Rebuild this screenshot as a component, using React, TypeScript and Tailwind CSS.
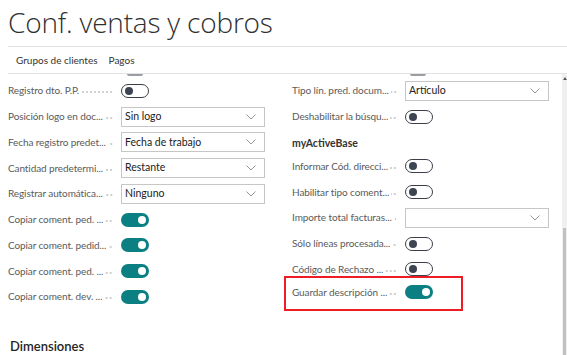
import React from 'react';

type Field =
  | { kind: 'toggle'; label: string; on: boolean }
  | { kind: 'select'; label: string; value: string };

const LEFT: Field[] = [
  { kind: 'toggle', label: 'Registro dto. P.P.', on: false },
  { kind: 'select', label: 'Posición logo en doc...', value: 'Sin logo' },
  { kind: 'select', label: 'Fecha registro predet...', value: 'Fecha de trabajo' },
  { kind: 'select', label: 'Cantidad predetermi...', value: 'Restante' },
  { kind: 'select', label: 'Registrar automática...', value: 'Ninguno' },
  { kind: 'toggle', label: 'Copiar coment. ped. ...', on: true },
  { kind: 'toggle', label: 'Copiar coment. pedid...', on: true },
  { kind: 'toggle', label: 'Copiar coment. ped. ...', on: true },
  { kind: 'toggle', label: 'Copiar coment. dev. ...', on: true },
];

const RIGHT_TOP: Field[] = [
  { kind: 'select', label: 'Tipo lín. pred. docum...', value: 'Artículo' },
  { kind: 'toggle', label: 'Deshabilitar la búsqu...', on: false },
];

const RIGHT_MAB: Field[] = [
  { kind: 'toggle', label: 'Informar Cód. direcci...', on: false },
  { kind: 'toggle', label: 'Habilitar tipo coment...', on: false },
  { kind: 'select', label: 'Importe total facturas...', value: '' },
  { kind: 'toggle', label: 'Sólo líneas procesada...', on: false },
  { kind: 'toggle', label: 'Código de Rechazo ...', on: false },
];

function Toggle({ on }: { on: boolean }) {
  return on ? (
    <div className="w-[28px] h-[14px] rounded-full bg-[#0b7f82] flex items-center justify-end pr-[3px]">
      <div className="w-[8px] h-[8px] rounded-full bg-white" />
    </div>
  ) : (
    <div className="w-[28px] h-[14px] rounded-full border border-[#3b3f48] bg-white flex items-center pl-[3px]">
      <div className="w-[8px] h-[8px] rounded-full bg-[#3d4452]" />
    </div>
  );
}

function Select({ value }: { value: string }) {
  return (
    <div className="w-[144px] h-[20px] border border-[#c6c6c6] flex items-center justify-between pl-[3px] pr-[8px] text-[10.5px] text-[#212121]">
      <span>{value}</span>
      <svg width="10" height="6" viewBox="0 0 10 6" fill="none">
        <path d="M0.5 0.5 L5 5 L9.5 0.5" stroke="#8a8a8a" strokeWidth="0.9" />
      </svg>
    </div>
  );
}

function Row({ field }: { field: Field }) {
  return (
    <div className="h-[25.75px] flex items-center">
      <div className="w-[105px] flex items-center text-[10px] tracking-[-0.1px] text-[#5a5a5a]">
        <span className="truncate max-w-[101px]">{field.label}</span>
        <div className="flex-1 min-w-[2px] ml-[2px] mt-[3px] h-[2px] bg-[radial-gradient(circle,#cfcfcf_0.7px,transparent_1px)] bg-[length:4px_2px] bg-repeat-x bg-right" />
      </div>
      <div className="ml-[8px]">
        {field.kind === 'toggle' ? <Toggle on={field.on} /> : <Select value={field.value} />}
      </div>
    </div>
  );
}

export default function App() {
  return (
    <div className="w-[567px] h-[355px] overflow-hidden bg-white flex flex-col font-['Lato','Open_Sans',sans-serif]">
      <div className="pl-[8px] pt-[2px] h-[46px] text-[28px] font-light text-[#303030] leading-[40px] tracking-[-0.2px] font-['Open_Sans',sans-serif]">
        Conf. ventas y cobros
      </div>
      <div className="ml-[8px] border-t border-[#e3e3e3]" />
      <div className="h-[26px] pl-[16px] flex items-center gap-[11px] text-[10px] text-[#333]">
        <span>Grupos de clientes</span>
        <span>Pagos</span>
      </div>
      <div className="ml-[8px] border-t border-[#e3e3e3]" />
      <div className="flex flex-1 min-h-0">
        <div className="flex-1 flex flex-col pl-[8px]">
          <div className="flex h-[8px]">
            <div className="w-[284px] pl-[119px]">
              <div className="w-[16px] h-[2px] rounded-b-full bg-[#9a9da3]" />
            </div>
            <div className="pl-[118px]">
              <div className="w-[16px] h-[2px] rounded-b-full bg-[#9a9da3]" />
            </div>
          </div>
          <div className="flex">
            <div className="w-[284px] flex flex-col">
              {LEFT.map((f, i) => (
                <Row key={i} field={f} />
              ))}
            </div>
            <div className="flex flex-col">
              {RIGHT_TOP.map((f, i) => (
                <Row key={i} field={f} />
              ))}
              <div className="h-[24px] pt-[5px] text-[10.5px] font-bold text-[#333] flex items-center">
                myActiveBase
              </div>
              {RIGHT_MAB.map((f, i) => (
                <Row key={i} field={f} />
              ))}
              <div className="mt-[-6px] ml-[-8px] w-[179px] border-2 border-[#ee1c25] pl-[6px] pt-[1px] pb-[4px]">
                <Row field={{ kind: 'toggle', label: 'Guardar descripción ...', on: true }} />
              </div>
            </div>
          </div>
          <div className="pl-[2px] pt-[26px] text-[13px] font-semibold leading-[18px] text-[#262626]">Dimensiones</div>
        </div>
        <div className="w-[5px] bg-[#f0f0f0] flex flex-col">
          <div className="h-[8px] flex items-center justify-center">
            <div className="w-0 h-0 border-l-[2px] border-r-[2px] border-b-[3px] border-l-transparent border-r-transparent border-b-[#555]" />
          </div>
          <div className="h-[146px]" />
          <div className="flex-1 mx-[1px] bg-[#c1c1c1]" />
        </div>
      </div>
    </div>
  );
}
